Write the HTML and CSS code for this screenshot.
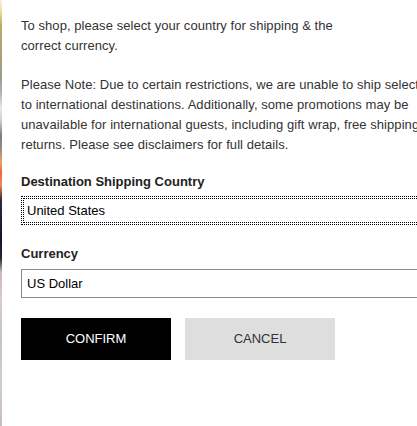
FILE: index.html
```html
<!DOCTYPE html>
<html lang="en">
<head>
<meta charset="utf-8">
<title>Select Country</title>
<link rel="stylesheet" href="styles.css">
</head>
<body>
<div class="page">
  <div class="backdrop"></div>
  <div class="modal">
    <p class="intro">To shop, please select your country for shipping &amp; the<br>correct currency.</p>
    <p class="note">Please Note: Due to certain restrictions, we are unable to ship select items<br>to international destinations. Additionally, some promotions may be<br>unavailable for international guests, including gift wrap, free shipping and<br>returns. Please see disclaimers for full details.</p>
    <div class="field">
      <label class="label" for="country">Destination Shipping Country</label>
      <select id="country" class="select select-focus">
        <option>United States</option>
      </select>
    </div>
    <div class="field">
      <label class="label" for="currency">Currency</label>
      <select id="currency" class="select">
        <option>US Dollar</option>
      </select>
    </div>
    <div class="actions">
      <button class="btn btn-confirm" type="button">CONFIRM</button>
      <button class="btn btn-cancel" type="button">CANCEL</button>
    </div>
  </div>
</div>
</body>
</html>
```
FILE: styles.css
```css
html, body {
  margin: 0;
  padding: 0;
  background: #fff;
  overflow: hidden;
}
body {
  width: 417px;
  height: 426px;
  font-family: "Liberation Sans", Arial, sans-serif;
  font-size: 13px;
  color: #333;
}
.page {
  display: flex;
  height: 426px;
}
.backdrop {
  flex: 0 0 2px;
  background: linear-gradient(to bottom,
    #f4f0e8 0px, #f0e4b0 8px, #e9d27a 14px, #b8aa70 26px, #a89f78 60px,
    #9c9a8c 76px, #b0b0b4 92px, #e8e8ea 108px, #d0d0d0 120px, #7c7c74 136px,
    #9a8c88 150px, #f0a060 162px, #e86840 172px, #f08a50 185px, #302838 200px,
    #141428 240px, #2a2430 258px, #c8b8b8 272px, #d8ccd0 300px, #c8c0c8 340px,
    #d4ccd0 380px, #c8bcc4 426px);
}
.modal {
  flex: 0 0 auto;
  width: 430px;
  padding: 16px 0 0 19px;
  display: flex;
  flex-direction: column;
}
.intro, .note {
  margin: 0 0 19px;
  line-height: 20px;
  letter-spacing: 0.06px;
  white-space: nowrap;
}
.note {
  margin-bottom: 17px;
}
.field {
  display: flex;
  flex-direction: column;
  margin-bottom: 19px;
}
.label {
  font-weight: bold;
  color: #222;
  line-height: 20px;
  margin-bottom: 4px;
}
.select {
  -webkit-appearance: none;
  appearance: none;
  width: 430px;
  height: 29px;
  box-sizing: border-box;
  border: 1px solid #8a8a8a;
  border-radius: 0;
  background: #fff;
  font-family: "Liberation Sans", Arial, sans-serif;
  font-size: 13px;
  color: #000;
  padding: 0 0 0 5px;
  margin: 0;
}
.select-focus {
  border: 1px dotted #000;
  outline: 1px dotted #000;
  outline-offset: -3px;
}
.field + .field .label {
  margin-bottom: 5px;
}
.actions {
  display: flex;
  gap: 14px;
  margin-top: 1px;
}
.btn {
  width: 150px;
  height: 42px;
  border: 0;
  border-radius: 0;
  font-family: "Liberation Sans", Arial, sans-serif;
  font-size: 13px;
  padding: 0 0 2px;
  margin: 0;
  cursor: pointer;
}
.btn-confirm {
  background: #000;
  color: #fff;
}
.btn-cancel {
  background: #dedede;
  color: #333;
}
```
